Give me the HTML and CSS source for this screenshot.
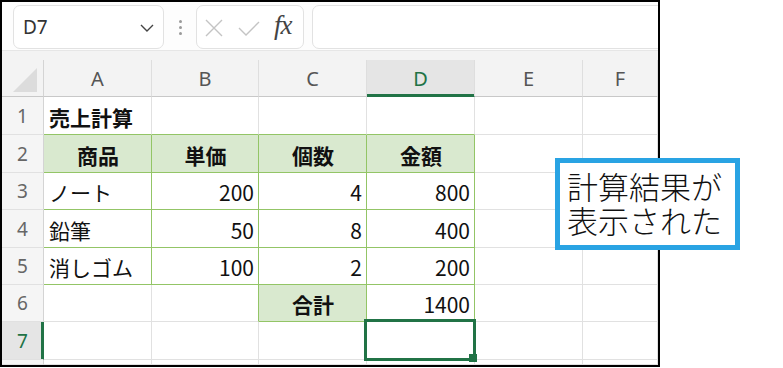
FILE: index.html
```html
<!DOCTYPE html>
<html lang="ja">
<head>
<meta charset="utf-8">
<title>Excel</title>
<link rel="stylesheet" href="styles.css">
</head>
<body>
<div class="frame">
  <div class="toolbar">
    <div class="namebox">
      <span class="ref">D7</span>
      <svg class="chev" width="14" height="8" viewBox="0 0 14 8"><path d="M1 1 L7 7 L13 1" fill="none" stroke="#444" stroke-width="1.4"/></svg>
    </div>
    <div class="dots"><i></i><i></i><i></i></div>
    <div class="fxbox">
      <svg class="xicon" width="18" height="18" viewBox="0 0 18 18"><path d="M1 1 L17 17 M17 1 L1 17" stroke="#c4c4c4" stroke-width="1.4" fill="none"/></svg>
      <svg class="ok" width="22" height="15" viewBox="0 0 22 15"><path d="M1 7 L8 14 L21 1" stroke="#c4c4c4" stroke-width="1.4" fill="none"/></svg>
      <span class="fx">fx</span>
    </div>
    <div class="formula"></div>
  </div>
  <div class="strip"></div>
  <div class="sheet">
    <div class="corner"><div class="tri"></div></div>
    <div class="ch">A</div>
    <div class="ch">B</div>
    <div class="ch">C</div>
    <div class="ch sel">D</div>
    <div class="ch">E</div>
    <div class="ch">F</div>

    <div class="rh">1</div>
    <div class="c b gb">売上計算</div>
    <div class="c gb"></div>
    <div class="c gb"></div>
    <div class="c gb"></div>
    <div class="c"></div>
    <div class="c"></div>

    <div class="rh">2</div>
    <div class="c b hd ctr gr gb">商品</div>
    <div class="c b hd ctr gr gb">単価</div>
    <div class="c b hd ctr gr gb">個数</div>
    <div class="c b hd ctr gr gb">金額</div>
    <div class="c"></div>
    <div class="c"></div>

    <div class="rh">3</div>
    <div class="c gr gb">ノート</div>
    <div class="c num gr gb">200</div>
    <div class="c num gr gb">4</div>
    <div class="c num gr gb">800</div>
    <div class="c"></div>
    <div class="c"></div>

    <div class="rh">4</div>
    <div class="c gr gb">鉛筆</div>
    <div class="c num gr gb">50</div>
    <div class="c num gr gb">8</div>
    <div class="c num gr gb">400</div>
    <div class="c"></div>
    <div class="c"></div>

    <div class="rh">5</div>
    <div class="c gr gb">消しゴム</div>
    <div class="c num gr gb">100</div>
    <div class="c num gr gb">2</div>
    <div class="c num gr gb">200</div>
    <div class="c"></div>
    <div class="c"></div>

    <div class="rh">6</div>
    <div class="c"></div>
    <div class="c gr"></div>
    <div class="c b hd ctr gr gb">合計</div>
    <div class="c num gr gb">1400</div>
    <div class="c"></div>
    <div class="c"></div>

    <div class="rh rsel">7</div>
    <div class="c"></div>
    <div class="c"></div>
    <div class="c"></div>
    <div class="c active"><div class="selbox"><div class="handle"></div></div></div>
    <div class="c"></div>
    <div class="c"></div>

    <div class="rh"></div>
    <div class="c"></div>
    <div class="c"></div>
    <div class="c"></div>
    <div class="c"></div>
    <div class="c"></div>
    <div class="c"></div>
  </div>
</div>
<div class="callout">
  <div class="line">計算結果が</div>
  <div class="line">表示された</div>
</div>
</body>
</html>
```
FILE: styles.css
```css
* { box-sizing: border-box; }
html, body { margin: 0; padding: 0; background: #fff; }
body {
  position: relative;
  width: 783px;
  height: 368px;
  overflow: hidden;
  font-family: "Noto Sans CJK JP", "Noto Sans", sans-serif;
}
.frame {
  width: 660px;
  height: 367px;
  border: 2px solid #000;
  overflow: hidden;
  display: flex;
  flex-direction: column;
  background: #fff;
}
.toolbar {
  height: 48px;
  flex: none;
  display: flex;
  align-items: flex-start;
  padding: 3px 0 0 11px;
  background: #fdfdfd;
}
.namebox, .fxbox, .formula {
  height: 44px;
  background: #fff;
  border: 1px solid #e2e2e2;
  border-radius: 7px;
  display: flex;
  align-items: center;
}
.namebox {
  width: 151px;
  padding: 0 9px 0 9px;
  justify-content: space-between;
}
.ref {
  font-family: "Noto Sans", sans-serif;
  font-size: 19px;
  color: #333;
}
.chev { margin-top: 1px; }
.dots {
  width: 32px;
  height: 44px;
  display: flex;
  flex-direction: column;
  align-items: center;
  justify-content: center;
  gap: 3px;
}
.dots i {
  display: block;
  width: 3px;
  height: 3px;
  border-radius: 50%;
  background: #9a9a9a;
}
.fxbox {
  width: 108px;
  padding-left: 8px;
}
.xicon { margin-top: 2px; }
.ok { margin-left: 15px; margin-top: 3px; }
.fx {
  margin-left: 14px;
  font-family: "Liberation Serif", serif;
  font-style: italic;
  font-size: 27px;
  color: #444;
  letter-spacing: -1px;
  margin-top: -4px;
}
.formula {
  flex: 1;
  margin-left: 8px;
  margin-right: -20px;
}
.strip {
  height: 10px;
  flex: none;
  background: #f3f3f3;
  border-top: 1px solid #e6e6e6;
}
.sheet {
  flex: 1;
  display: grid;
  grid-template-columns: 42px 108px 107px 108px 108px 108px 1fr;
  grid-template-rows: 37px 38px 38px 37px 38px 37px 37px 38px 1fr;
  background: #fff;
}
.corner {
  background: #f3f3f3;
  border-right: 1px solid #d4d4d4;
  border-bottom: 1px solid #c8c8c8;
  display: flex;
  align-items: flex-end;
  justify-content: flex-end;
  padding: 0 6px 4px 0;
}
.tri {
  width: 24px;
  height: 24px;
  background: #dcdcdc;
  clip-path: polygon(100% 0, 100% 100%, 0 100%);
}
.ch {
  background: #f3f3f3;
  border-right: 1px solid #dedede;
  border-bottom: 1px solid #c8c8c8;
  display: flex;
  align-items: center;
  justify-content: center;
  font-family: "Noto Sans", sans-serif;
  font-size: 20px;
  color: #555;
}
.ch.sel {
  background: #e5e5e5;
  color: #217346;
  border-bottom-color: #217346;
  box-shadow: inset 0 -2px 0 #217346;
}
.rh {
  background: #f5f5f5;
  border-right: 1px solid #d4d4d4;
  border-bottom: 1px solid #e1e1e1;
  display: flex;
  align-items: center;
  justify-content: center;
  font-family: "Noto Sans", sans-serif;
  font-size: 19px;
  color: #666;
}
.rh.rsel {
  background: #e5e5e5;
  color: #217346;
  border-right-color: #217346;
  box-shadow: inset -2px 0 0 #217346;
}
.c {
  border-right: 1px solid #e1e1e1;
  border-bottom: 1px solid #e1e1e1;
  display: flex;
  align-items: center;
  padding: 2px 4px 0 5px;
  font-size: 21px;
  color: #111;
  white-space: nowrap;
  overflow: hidden;
}
.c.b { font-weight: 700; }
.c.ctr { justify-content: center; }
.c.num { justify-content: flex-end; }
.c.hd { background: #d9e9cf; }
.c.gr { border-right-color: #93c566; }
.c.gb { border-bottom-color: #93c566; }
.c.active { position: relative; overflow: visible; }
.selbox {
  position: absolute;
  top: -3px;
  left: -3px;
  right: -2px;
  bottom: -2px;
  border: 3px solid #217346;
  z-index: 2;
}
.handle {
  position: absolute;
  right: -4px;
  bottom: -4px;
  width: 8px;
  height: 8px;
  background: #217346;
}
.callout {
  position: absolute;
  left: 555px;
  top: 158px;
  width: 185px;
  height: 92px;
  border: 5px solid #29a3e3;
  background: #fff;
  padding: 6px 0 0 7px;
  font-family: "Noto Sans CJK JP", sans-serif;
  font-size: 31px;
  font-weight: 300;
  color: #111;
  white-space: nowrap;
}
.line {
  height: 34px;
  line-height: 34px;
}
```
